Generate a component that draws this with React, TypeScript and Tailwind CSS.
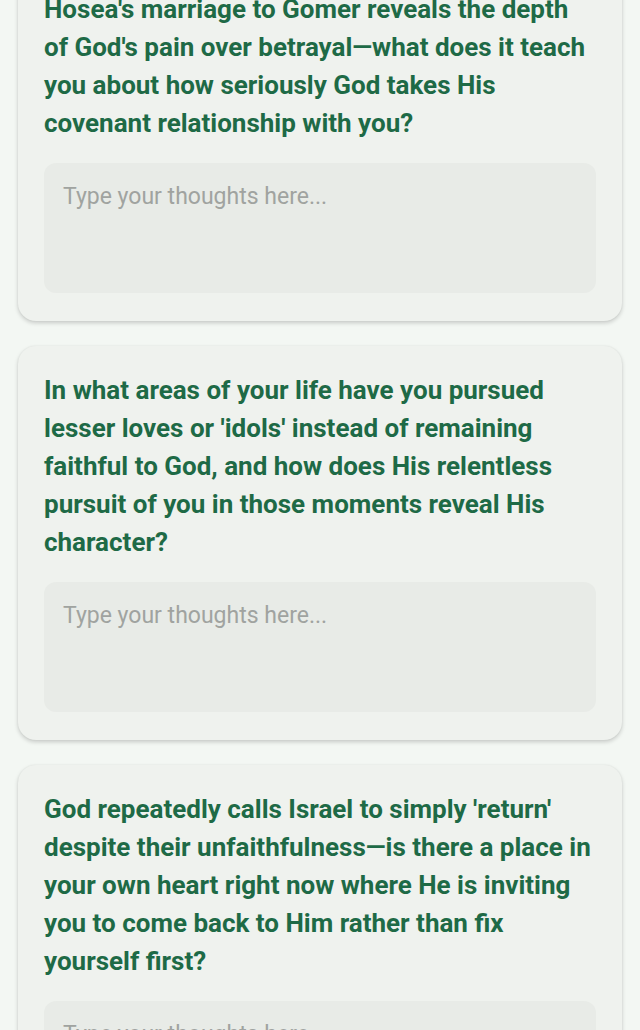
const questions = [
  "Hosea's marriage to Gomer reveals the depth of God's pain over betrayal\u2014what does it teach you about how seriously God takes His covenant relationship with you?",
  "In what areas of your life have you pursued lesser loves or 'idols' instead of remaining faithful to God, and how does His relentless pursuit of you in those moments reveal His character?",
  "God repeatedly calls Israel to simply 'return' despite their unfaithfulness\u2014is there a place in your own heart right now where He is inviting you to come back to Him rather than fix yourself first?",
];

function ReflectionCard({ question }: { question: string }) {
  return (
    <section className="rounded-[18px] bg-[#eff2ee] px-[26px] pb-[28px] pt-[25px] shadow-[0_2px_4px_rgba(0,0,0,0.18),0_0_2px_rgba(0,0,0,0.06)]">
      <h3 className="text-[26px] font-bold leading-[38px] text-[#1e6a46]">{question}</h3>
      <textarea
        placeholder="Type your thoughts here..."
        className="mt-[21px] block h-[130px] w-full resize-none rounded-[12px] bg-[#e8ebe7] px-[19px] py-[18px] text-[23px] leading-[32px] text-gray-800 outline-none placeholder:text-[#a0a3a0]"
      />
    </section>
  );
}

export default function App() {
  return (
    <div className="h-[1030px] overflow-hidden bg-[#f3f7f3] font-['Roboto',sans-serif]">
      <div className="-mt-[35px] flex flex-col gap-[25px] px-[18px]">
        {questions.map((q) => (
          <ReflectionCard key={q} question={q} />
        ))}
      </div>
    </div>
  );
}
